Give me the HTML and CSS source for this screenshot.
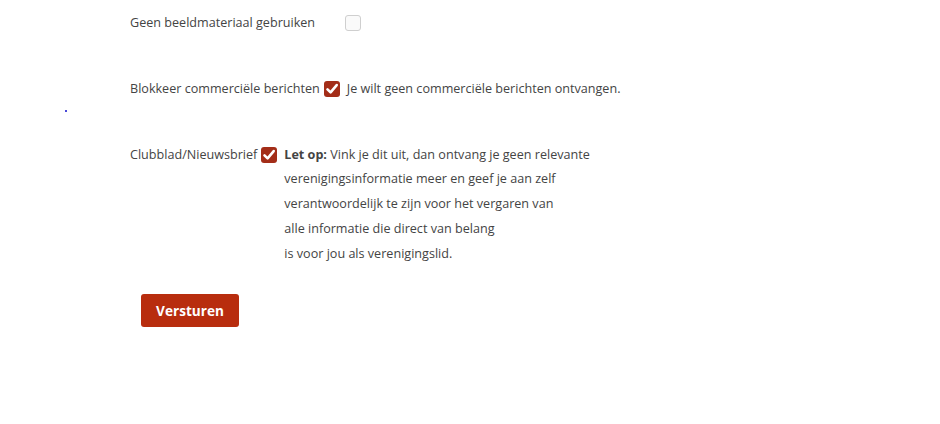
FILE: index.html
```html
<!DOCTYPE html>
<html lang="nl">
<head>
<meta charset="utf-8">
<link rel="stylesheet" href="styles.css">
</head>
<body>
<span class="dot"></span>
<form class="form">
  <div class="row row-first">
    <span class="label label-wide">Geen beeldmateriaal gebruiken</span>
    <span class="box"></span>
  </div>
  <div class="row">
    <span class="label">Blokkeer commerciële berichten</span>
    <span class="box checked"><svg viewBox="0 0 16 16" width="16" height="16"><path d="M3.5 8.3 L6.6 11.4 L12.7 4.1" fill="none" stroke="#fff" stroke-width="2.6" stroke-linecap="round" stroke-linejoin="round"/></svg></span>
    <span class="desc">Je wilt geen commerciële berichten ontvangen.</span>
  </div>
  <div class="row">
    <span class="label">Clubblad/Nieuwsbrief</span>
    <span class="box checked"><svg viewBox="0 0 16 16" width="16" height="16"><path d="M3.5 8.3 L6.6 11.4 L12.7 4.1" fill="none" stroke="#fff" stroke-width="2.6" stroke-linecap="round" stroke-linejoin="round"/></svg></span>
    <span class="desc"><b>Let op:</b> Vink je dit uit, dan ontvang je geen relevante<br>verenigingsinformatie meer en geef je aan zelf<br>verantwoordelijk te zijn voor het vergaren van<br>alle informatie die direct van belang<br>is voor jou als verenigingslid.</span>
  </div>
  <div class="actions">
    <button type="button" class="btn">Versturen</button>
  </div>
</form>
</body>
</html>
```
FILE: styles.css
```css
html, body {
  margin: 0;
  padding: 0;
  background: #fff;
}
body {
  font-family: "Open Sans", "Liberation Sans", sans-serif;
  font-size: 12.6px;
  color: #444;
  position: relative;
  width: 940px;
  height: 424px;
  overflow: hidden;
}
.dot {
  position: absolute;
  left: 65px;
  top: 110px;
  width: 2px;
  height: 2px;
  background: #4a4ad8;
}
.form {
  padding: 11px 0 0 130px;
  display: flex;
  flex-direction: column;
}
.row {
  display: flex;
  align-items: flex-start;
  line-height: 24.75px;
  margin-bottom: 41px;
}
.label-wide {
  width: 211px;
}
.box {
  flex: none;
  width: 16px;
  height: 16px;
  box-sizing: border-box;
  margin: 4px 7px 0 4px;
  border: 1px solid #cfcfcf;
  border-radius: 3px;
  background: #fafafa;
  display: flex;
}
.box.checked {
  border: none;
  background: #a32d18;
}
.desc b {
  font-weight: 700;
}
.actions {
  margin-top: -13px;
  padding-left: 11px;
}
.btn {
  font-family: "Open Sans", "Liberation Sans", sans-serif;
  font-size: 13.6px;
  font-weight: 700;
  color: #fff;
  background: #b82d0e;
  border: none;
  border-radius: 3px;
  width: 98px;
  height: 33px;
  padding: 0;
}
```
